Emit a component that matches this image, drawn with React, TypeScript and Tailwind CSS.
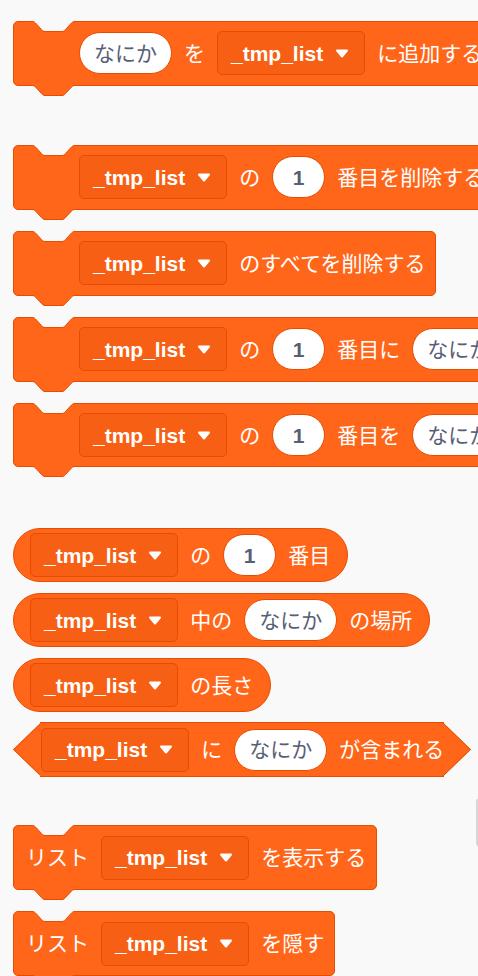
import React from "react";

type Part =
  | { kind: "label"; text: string }
  | { kind: "list" }
  | { kind: "input"; text: string };

const ORANGE = "bg-[#ff661a]";

const Arrow = () => (
  <svg width="14" height="9" viewBox="0 0 14 9" className="shrink-0">
    <path d="M2 1.5 H12 L7 7.5 Z" fill="#fff" stroke="#fff" strokeWidth="2" strokeLinejoin="round" />
  </svg>
);

const ListDropdown = () => (
  <div className="flex items-center gap-3 h-[44px] pl-[13px] pr-[15px] rounded-[5px] border border-[#e64d00] bg-[#f75f14] shrink-0">
    <span className="text-white text-[21px] font-bold leading-none">_tmp_list</span>
    <Arrow />
  </div>
);

const Input = ({ text }: { text: string }) => {
  const isNumber = /^\d+$/.test(text);
  return (
    <div className="flex items-center justify-center h-[42px] min-w-[53px] px-[14px] rounded-full bg-white border border-[#e64d00] shrink-0">
      <span className={`text-[#575e75] text-[21px] leading-none ${isNumber ? "font-bold" : "font-normal"}`}>{text}</span>
    </div>
  );
};

const Parts = ({ parts }: { parts: Part[] }) => (
  <>
    {parts.map((p, i) => {
      if (p.kind === "list") return <ListDropdown key={i} />;
      if (p.kind === "input") return <Input key={i} text={p.text} />;
      return (
        <span key={i} className="text-white text-[21px] font-normal leading-none whitespace-nowrap shrink-0">
          {p.text}
        </span>
      );
    })}
  </>
);

// notch curve shared by the top dent and the bottom tab
const NOTCH = "M0 0.5 C1.5 0.5 2.5 1 3.5 2 L9.5 8.5 C10.5 9.8 11.5 10.5 13 10.5 H30 C31.5 10.5 32.5 9.8 33.5 8.5 L39.5 2 C40.5 1 41.5 0.5 43 0.5";

const StackBlock = ({ parts, padLeft, className = "" }: { parts: Part[]; padLeft: "wide" | "narrow"; className?: string }) => (
  <div
    className={`relative flex items-center gap-3 h-[65px] w-max ${ORANGE} border border-[#e64d00] rounded-[5px] pr-[10px] ${
      padLeft === "wide" ? "pl-[65px]" : "pl-[12px]"
    } ${className}`}
  >
    <Parts parts={parts} />
    {/* top dent */}
    <svg className="absolute left-[18px] -top-px overflow-visible" width="43" height="12" viewBox="0 0 43 12">
      <path d={`${NOTCH} V0 H0 Z`} fill="#f9f9f9" />
      <path d={NOTCH} fill="none" stroke="#e64d00" strokeWidth="1" />
    </svg>
    {/* bottom tab */}
    <svg className="absolute left-[18px] top-full overflow-visible" width="43" height="12" viewBox="0 0 43 12">
      <path d={`${NOTCH} V0 H0 Z`} fill="#ff661a" />
      <path d={NOTCH} fill="none" stroke="#e64d00" strokeWidth="1" />
    </svg>
  </div>
);

const Reporter = ({ parts, className = "" }: { parts: Part[]; className?: string }) => (
  <div className={`flex items-center gap-3 h-[54px] w-max ${ORANGE} border border-[#e64d00] rounded-full pl-4 pr-[17px] ${className}`}>
    <Parts parts={parts} />
  </div>
);

const BoolBlock = ({ parts, className = "" }: { parts: Part[]; className?: string }) => (
  <div className={`flex h-[55px] w-max ${className}`}>
    <svg width="28" height="55" viewBox="0 0 28 55" className="shrink-0 -mr-px">
      <path d="M28.5 0 L0 27.5 L28.5 55 Z" fill="#ff661a" />
      <path d="M28.5 0.5 L0.7 27.5 L28.5 54.5" fill="none" stroke="#e64d00" strokeWidth="1" />
    </svg>
    <div className={`flex items-center gap-3 pl-px ${ORANGE} border-y border-[#e64d00]`}>
      <Parts parts={parts} />
    </div>
    <svg width="28" height="55" viewBox="0 0 28 55" className="shrink-0 -ml-px">
      <path d="M-0.5 0 L28 27.5 L-0.5 55 Z" fill="#ff661a" />
      <path d="M-0.5 0.5 L27.3 27.5 L-0.5 54.5" fill="none" stroke="#e64d00" strokeWidth="1" />
    </svg>
  </div>
);

const L = (text: string): Part => ({ kind: "label", text });
const I = (text: string): Part => ({ kind: "input", text });
const LIST: Part = { kind: "list" };

export default function App() {
  return (
    <div className="relative w-[478px] h-[976px] overflow-hidden bg-[#f9f9f9] pl-[13px] pt-[21px] flex flex-col items-start font-['Liberation_Sans','Noto_Sans_CJK_JP',sans-serif]">
      <StackBlock padLeft="wide" parts={[I("なにか"), L("を"), LIST, L("に追加する")]} />

      <StackBlock padLeft="wide" className="mt-[59px]" parts={[LIST, L("の"), I("1"), L("番目を削除する")]} />
      <StackBlock padLeft="wide" className="mt-[21px]" parts={[LIST, L("のすべてを削除する")]} />
      <StackBlock padLeft="wide" className="mt-[21px]" parts={[LIST, L("の"), I("1"), L("番目に"), I("なにか"), L("を挿入する")]} />
      <StackBlock padLeft="wide" className="mt-[21px]" parts={[LIST, L("の"), I("1"), L("番目を"), I("なにか"), L("で置き換える")]} />

      <Reporter className="mt-[61px]" parts={[LIST, L("の"), I("1"), L("番目")]} />
      <Reporter className="mt-[11px]" parts={[LIST, L("中の"), I("なにか"), L("の場所")]} />
      <Reporter className="mt-[11px]" parts={[LIST, L("の長さ")]} />
      <BoolBlock className="mt-[10px]" parts={[LIST, L("に"), I("なにか"), L("が含まれる")]} />

      <StackBlock padLeft="narrow" className="mt-[48px]" parts={[L("リスト"), LIST, L("を表示する")]} />
      <StackBlock padLeft="narrow" className="mt-[21px]" parts={[L("リスト"), LIST, L("を隠す")]} />

      {/* flyout scrollbar */}
      <div className="absolute left-[476px] top-[798px] w-[8px] h-[49px] rounded-[4px] bg-[#d6d6d6]" />
    </div>
  );
}
